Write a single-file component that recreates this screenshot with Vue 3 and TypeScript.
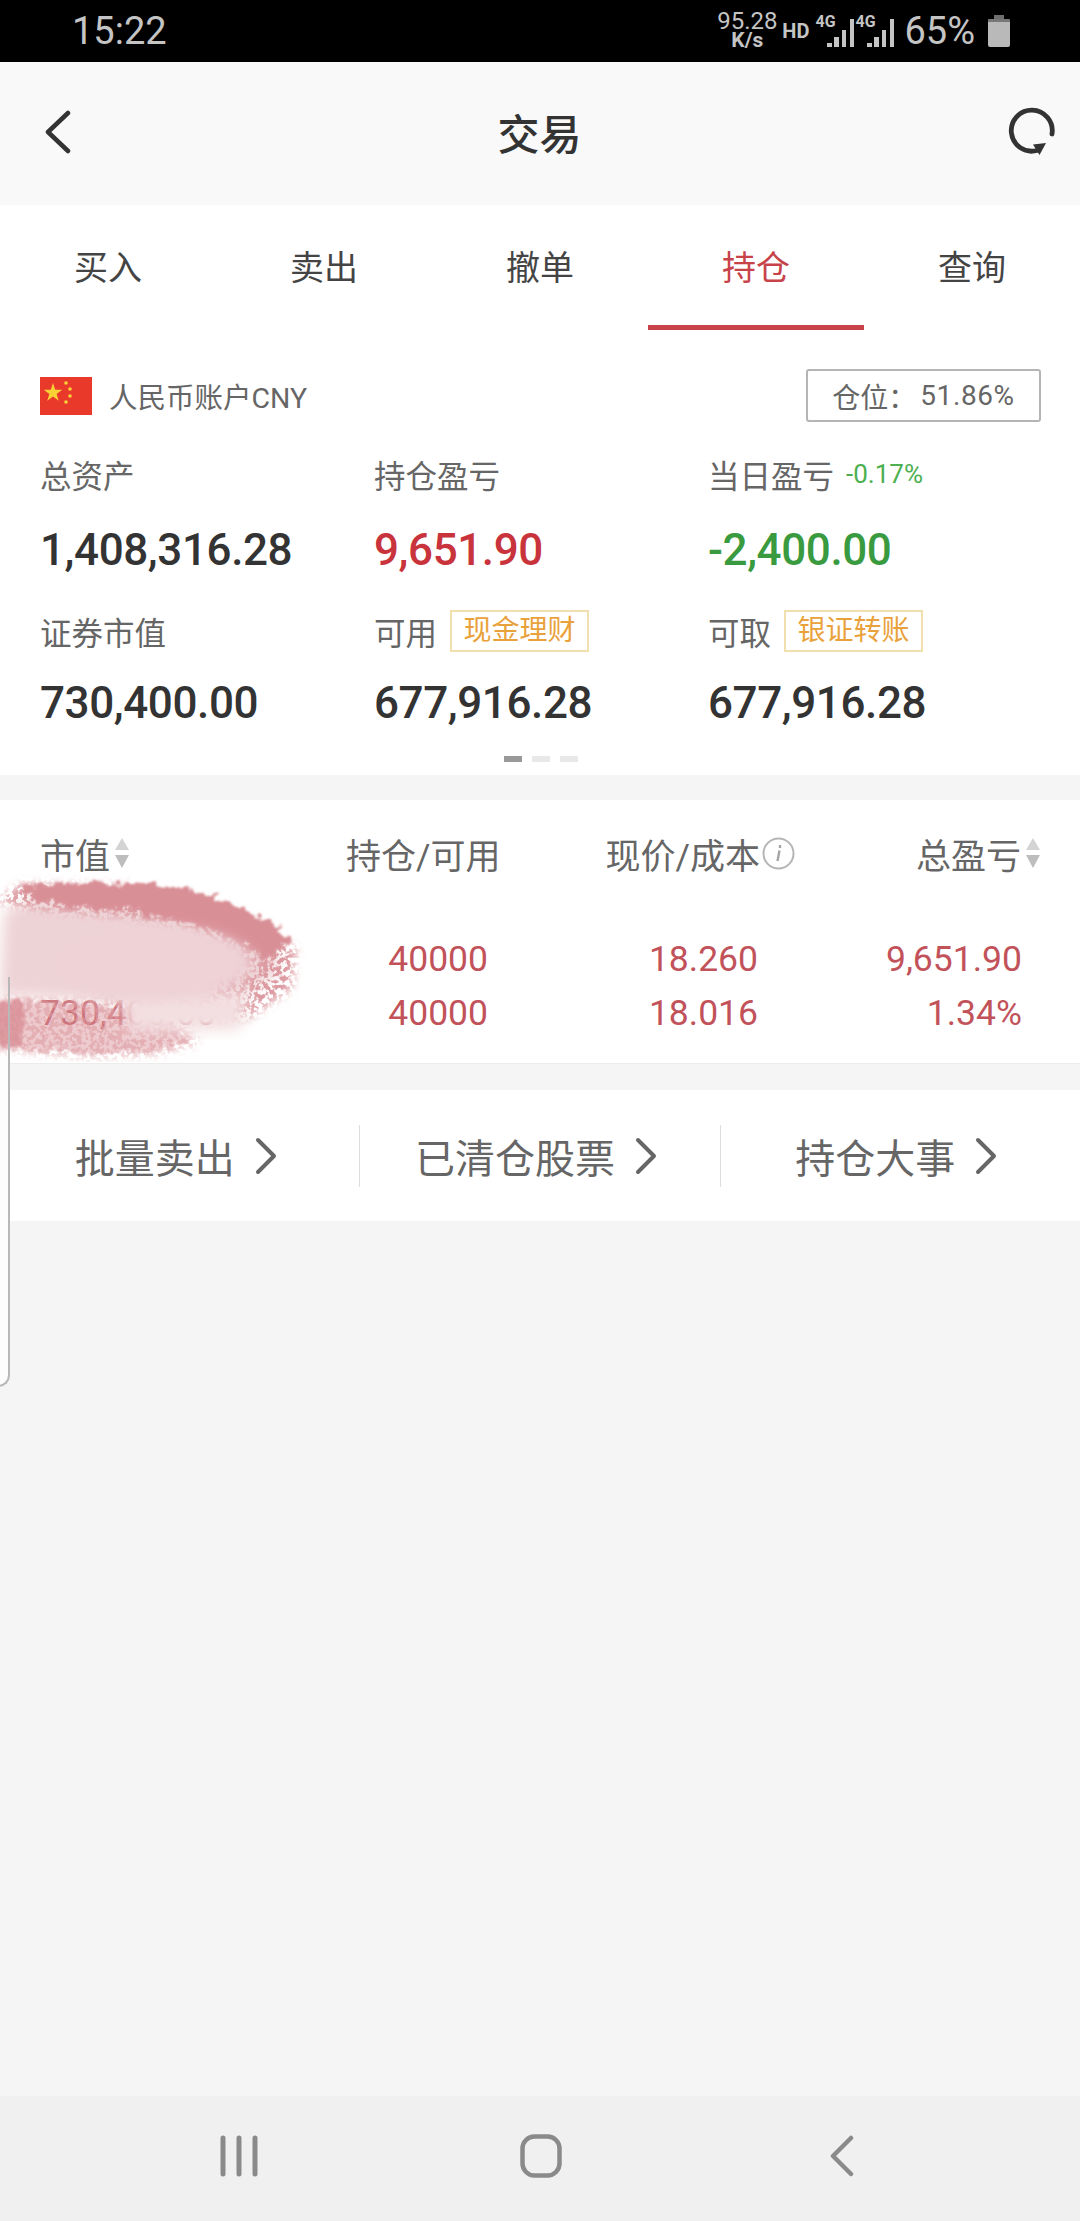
<template>
  <div class="page">
    <div class="status-bar">
      <span class="clock">15:22</span>
      <div class="status-right">
        <div class="speed"><span>95.28</span><b>K/s</b></div>
        <span class="hd">HD</span>
        <div v-for="n in 2" :key="n" class="signal">
          <span class="signal-label">4G</span>
          <svg width="28" height="28" viewBox="0 0 28 28">
            <rect x="1" y="24" width="5" height="4" />
            <rect x="8" y="18" width="5" height="10" />
            <rect x="16" y="11" width="4" height="17" />
            <rect x="24" y="0" width="4" height="28" />
          </svg>
        </div>
        <span class="battery-text">65%</span>
        <svg class="battery" width="22" height="32" viewBox="0 0 22 32">
          <path d="M6 0h10v4H6z" fill="#6e6e6e" />
          <path d="M1 4h20a1 1 0 0 1 1 1v2H0V5a1 1 0 0 1 1-1z" fill="#777" />
          <path d="M0 7h22v23a2 2 0 0 1-2 2H2a2 2 0 0 1-2-2z" fill="#b9b9b9" />
        </svg>
      </div>
    </div>

    <header class="nav-bar">
      <svg width="27" height="44" viewBox="0 0 27 44" fill="none" stroke="#333" stroke-width="4.5" stroke-linecap="round" stroke-linejoin="round">
        <path d="M24 3 4 22l20 19" />
      </svg>
      <h1 class="title">交易</h1>
      <svg width="48" height="50" viewBox="0 0 48 50" fill="none">
        <path d="M44 27A20.5 20.5 0 1 0 29 43.5" stroke="#333" stroke-width="4.8" stroke-linecap="round" />
        <path d="M25 37.5 38 36l-6.500 12z" fill="#333" />
      </svg>
    </header>

    <nav class="tabs">
      <div v-for="t in tabs" :key="t" class="tab" :class="{ active: t === '持仓' }">{{ t }}</div>
    </nav>

    <section class="summary">
      <div class="account-row">
        <div class="account">
          <svg width="52" height="38" viewBox="0 0 52 38">
            <rect width="52" height="38" fill="#e8392b" />
            <polygon points="13,6 15.200,12.800 22.300,12.800 16.600,17 18.800,23.800 13,19.600 7.200,23.800 9.400,17 3.700,12.800 10.800,12.800" fill="#fbd235" />
            <circle cx="26" cy="6" r="1.800" fill="#fbd235" />
            <circle cx="30" cy="12" r="1.800" fill="#fbd235" />
            <circle cx="30" cy="19" r="1.800" fill="#fbd235" />
            <circle cx="26" cy="25" r="1.800" fill="#fbd235" />
          </svg>
          <span class="account-name">人民币账户CNY</span>
        </div>
        <div class="position"><span>仓位：</span><span class="position-val">51.86%</span></div>
      </div>

      <div class="stats">
        <div class="label first">总资产</div>
        <div class="label first">持仓盈亏</div>
        <div class="label first">当日盈亏<span class="pct">-0.17%</span></div>
        <div class="value first-val">1,408,316.28</div>
        <div class="value first-val up">9,651.90</div>
        <div class="value first-val down">-2,400.00</div>
        <div class="label">证券市值</div>
        <div class="label">可用<span class="tag">现金理财</span></div>
        <div class="label">可取<span class="tag">银证转账</span></div>
        <div class="value">730,400.00</div>
        <div class="value">677,916.28</div>
        <div class="value">677,916.28</div>
      </div>

      <div class="dots">
        <i class="on"></i><i></i><i></i>
      </div>
    </section>

    <section class="holdings">
      <div class="grid head">
        <div class="cell">市值<svg class="sort" width="14" height="30" viewBox="0 0 14 30"><path d="M7 0l7 12H0z" fill="#d4d4d4" /><path d="M0 17h14L7 30z" fill="#bdbdbd" /></svg></div>
        <div class="cell">持仓/可用</div>
        <div class="cell end price-head">
          现价/成本
          <svg class="info" width="33" height="33" viewBox="0 0 33 33">
            <circle cx="16.500" cy="16.500" r="15" fill="none" stroke="#b5b5b5" stroke-width="2" />
            <path d="M17.500 13.500 15.500 24M18 8v3" fill="none" stroke="#a5a5a5" stroke-width="2.400" />
          </svg>
        </div>
        <div class="cell end">总盈亏<svg class="sort" width="14" height="30" viewBox="0 0 14 30"><path d="M7 0l7 12H0z" fill="#d4d4d4" /><path d="M0 17h14L7 30z" fill="#bdbdbd" /></svg></div>
      </div>
      <div v-for="(r, i) in rows" :key="i" class="grid row">
        <div class="name">{{ r[0] }}</div>
        <div class="num col2">{{ r[1] }}</div>
        <div class="num col3">{{ r[2] }}</div>
        <div class="num col4">{{ r[3] }}</div>
      </div>

      <!-- the smear somebody painted over the stock name -->
      <svg class="smear" width="320" height="190" viewBox="0 0 320 190">
        <defs>
          <filter id="rough" x="-10%" y="-10%" width="120%" height="120%">
            <feTurbulence type="fractalNoise" baseFrequency="0.12" numOctaves="3" seed="4" result="noise" />
            <feDisplacementMap in="SourceGraphic" in2="noise" scale="16" xChannelSelector="R" yChannelSelector="G" result="moved" />
            <feGaussianBlur in="moved" stdDeviation="1.200" />
          </filter>
          <filter id="grain" x="-10%" y="-10%" width="120%" height="120%">
            <feGaussianBlur in="SourceGraphic" stdDeviation="5" result="soft" />
            <feTurbulence type="fractalNoise" baseFrequency="0.22" numOctaves="2" seed="9" />
            <feColorMatrix values="0 0 0 0 0  0 0 0 0 0  0 0 0 0 0  0 0 0 7 -3" result="holes" />
            <feComposite in="soft" in2="holes" operator="in" />
          </filter>
          <filter id="soft" x="-20%" y="-20%" width="140%" height="140%">
            <feGaussianBlur stdDeviation="7" />
          </filter>
        </defs>
        <path d="M4 40 40 22 200 30 270 60 280 100 240 126 170 136 60 126 0 124z" fill="#eed3d6" filter="url(#soft)" />
        <path d="M-4 30 20 12 120 14 240 50 296 76 292 116 250 146 190 150 210 120 240 80 190 56 120 44 60 40z" fill="#dc9aa0" filter="url(#grain)" />
        <path d="M18 14 100 10 190 16 262 44 292 68 270 86 200 54 130 38 70 34 30 24z" fill="#d98f96" filter="url(#rough)" />
        <path d="M-6 126 60 130 130 136 170 150 190 170 150 180 90 182 -6 176z" fill="#df9fa5" fill-opacity="0.55" filter="url(#rough)" />
        <path d="M-6 126 60 128 150 128 180 150 200 172 150 184 90 186 -6 178z" fill="#dd9ca2" fill-opacity="0.6" filter="url(#grain)" />
        <path d="M-6 128 24 130 20 176 -6 172z" fill="#d98f96" fill-opacity="0.8" filter="url(#rough)" />
        <path d="M124 122 250 120 240 158 128 160z" fill="#f3dfe1" filter="url(#soft)" />
        <ellipse cx="154" cy="92" rx="100" ry="36" fill="#eed2d5" filter="url(#soft)" />
      </svg>
    </section>

    <section class="actions">
      <div v-for="a in actions" :key="a" class="action">
        <span>{{ a }}</span>
        <svg width="22" height="38" viewBox="0 0 22 38" fill="none" stroke="#666" stroke-width="4" stroke-linecap="round" stroke-linejoin="round">
          <path d="M3 3l16 16L3 35" />
        </svg>
      </div>
    </section>

    <div class="spacer"></div>

    <footer class="sys-nav">
      <svg width="38" height="42" viewBox="0 0 38 42" fill="none" stroke="#8a8a8a" stroke-width="5" stroke-linecap="round">
        <path d="M3 3v36M19 3v36M35 3v36" />
      </svg>
      <svg class="home" width="42" height="44" viewBox="0 0 42 44" fill="none" stroke="#8a8a8a" stroke-width="4.500">
        <rect x="2.500" y="2.500" width="37" height="39" rx="12" />
      </svg>
      <svg width="24" height="42" viewBox="0 0 24 42" fill="none" stroke="#8a8a8a" stroke-width="4.500" stroke-linecap="round" stroke-linejoin="round">
        <path d="M21 3 3 21l18 18" />
      </svg>
    </footer>

    <div class="edge-panel"></div>
  </div>
</template>

<script setup lang="ts">
const tabs: string[] = ['买入', '卖出', '撤单', '持仓', '查询'];

const rows: [string, string, string, string][] = [
  ['', '40000', '18.260', '9,651.90'],
  ['730,400.00', '40000', '18.016', '1.34%'],
];

const actions: string[] = ['批量卖出', '已清仓股票', '持仓大事'];
</script>

<style>
html,
body {
  margin: 0;
  background: #f5f5f5;
}
</style>

<style scoped>
.page {
  position: relative;
  display: flex;
  flex-direction: column;
  width: 1080px;
  height: 2221px;
  overflow: hidden;
  background: #f5f5f5;
  font-family: Roboto, "Noto Sans CJK SC", sans-serif;
  color: #333;
}

.status-bar {
  display: flex;
  justify-content: space-between;
  align-items: center;
  height: 62px;
  padding: 0 70px 0 72px;
  background: #000;
  color: #c4c4c4;
  box-sizing: border-box;
}

.clock {
  font-size: 38px;
  line-height: 1;
}

.status-right {
  display: flex;
  align-items: center;
  height: 100%;
}

.speed {
  display: flex;
  flex-direction: column;
  align-items: center;
  width: 62px;
  font-size: 24px;
  line-height: 19px;
}

.speed b {
  font-size: 21px;
  font-weight: 700;
}

.hd {
  margin: 0 6px 0 4px;
  font-size: 20px;
  font-weight: 700;
}

.signal {
  position: relative;
  width: 40px;
  height: 30px;
  margin-top: 2px;
}

.signal svg {
  position: absolute;
  right: 1px;
  bottom: 0;
  fill: #c4c4c4;
}

.signal-label {
  position: absolute;
  left: 0;
  top: -2px;
  font-size: 16px;
  font-weight: 700;
  line-height: 14px;
}

.battery-text {
  margin-left: 9px;
  font-size: 38px;
  line-height: 1;
}

.battery {
  margin-left: 13px;
}

.nav-bar {
  display: flex;
  justify-content: space-between;
  align-items: center;
  height: 143px;
  padding: 0 24px 4px 44px;
  box-sizing: border-box;
  background: #f9f9f9;
}

.title {
  margin: 0;
  font-size: 42px;
  font-weight: 500;
  color: #333;
}

.tabs {
  display: flex;
  height: 125px;
  background: #fff;
}

.tab {
  flex: 1;
  padding-top: 39px;
  box-sizing: border-box;
  text-align: center;
  font-size: 34px;
  line-height: 48px;
  color: #444;
}

.tab.active {
  color: #c8424a;
  border-bottom: 5px solid #c8424a;
}

.summary {
  padding: 39px 39px 0 40px;
  background: #fff;
}

.account-row {
  display: flex;
  justify-content: space-between;
  align-items: center;
  height: 53px;
}

.account {
  display: flex;
  align-items: center;
  gap: 17px;
}

.account-name {
  font-size: 28.500px;
  color: #666;
}

.position {
  display: flex;
  align-items: center;
  justify-content: center;
  width: 235px;
  height: 53px;
  box-sizing: border-box;
  border: 2px solid #b5b5b5;
  border-radius: 3px;
  font-size: 28px;
  color: #666;
}

.position-val {
  margin-left: 4px;
  letter-spacing: 0.6px;
}

.stats {
  display: grid;
  grid-template-columns: 334px 334px 1fr;
  grid-template-rows: 50px 94px 70px 74px;
  margin-top: 30px;
  align-items: center;
}

.label {
  display: flex;
  align-items: center;
  font-size: 31.500px;
  color: #666;
}

.label.first {
  margin-bottom: 6px;
}

.pct {
  margin-left: 12px;
  font-size: 26px;
  color: #4caf50;
}

.tag {
  margin-left: 13px;
  width: 139px;
  height: 42px;
  box-sizing: border-box;
  border: 2px solid #f2dfb0;
  text-align: center;
  font-size: 28px;
  line-height: 37px;
  color: #e9a23b;
}

.value {
  font-size: 44px;
  font-weight: 500;
  letter-spacing: -0.4px;
  color: #333;
}

.first-val {
  margin-top: 2px;
}

.up {
  color: #c8333c;
}

.down {
  color: #3a9a3f;
}

.dots {
  display: flex;
  justify-content: center;
  gap: 10px;
  height: 35px;
  padding-top: 16px;
  box-sizing: border-box;
}

.dots i {
  width: 18px;
  height: 6px;
  background: #e8e8e8;
}

.dots i.on {
  background: #999;
}

.holdings {
  position: relative;
  margin-top: 25px;
  padding-bottom: 23px;
  background: #fff;
  border-bottom: 1px solid #ececec;
}

.grid {
  display: grid;
  grid-template-columns: 306px 192px 262px 240px;
  padding: 0 40px;
  align-items: center;
}

.head {
  height: 106px;
  margin-bottom: 26px;
  font-size: 35px;
  color: #666;
}

.cell {
  display: flex;
  align-items: center;
  white-space: nowrap;
}

.end {
  justify-content: flex-end;
}

.price-head {
  padding-right: 5px;
}

.sort {
  margin-left: 5px;
  flex-shrink: 0;
}

.info {
  margin-left: 2px;
  flex-shrink: 0;
}

.row {
  height: 54px;
  font-size: 35.500px;
  color: #c2525a;
}

.name {
  color: #b8404a;
}

.num {
  text-align: right;
}

.col2 {
  padding-right: 50px;
}

.col3 {
  padding-right: 42px;
}

.col4 {
  padding-right: 18px;
}

.smear {
  position: absolute;
  left: 0;
  top: 72px;
}

.actions {
  display: flex;
  align-items: center;
  height: 131px;
  margin-top: 26px;
  background: #fff;
}

.action {
  display: flex;
  flex: 1;
  justify-content: center;
  align-items: center;
  gap: 20px;
  height: 62px;
  padding-right: 8px;
  box-sizing: border-box;
  font-size: 40px;
  color: #666;
}

.action + .action {
  border-left: 1px solid #ddd;
}

.spacer {
  flex: 1;
}

.sys-nav {
  display: flex;
  align-items: center;
  height: 125px;
  padding: 0 226px 6px 220px;
  box-sizing: border-box;
  justify-content: space-between;
  background: #f0f0f0;
}

.home {
  margin-right: 7px;
}

.edge-panel {
  position: absolute;
  left: -12px;
  top: 977px;
  width: 22px;
  height: 410px;
  box-sizing: border-box;
  border: 2px solid #b8b8b8;
  border-top: 0;
  border-radius: 0 0 12px 0;
  background: linear-gradient(transparent 80px, #fdfdfd 80px);
}
</style>
